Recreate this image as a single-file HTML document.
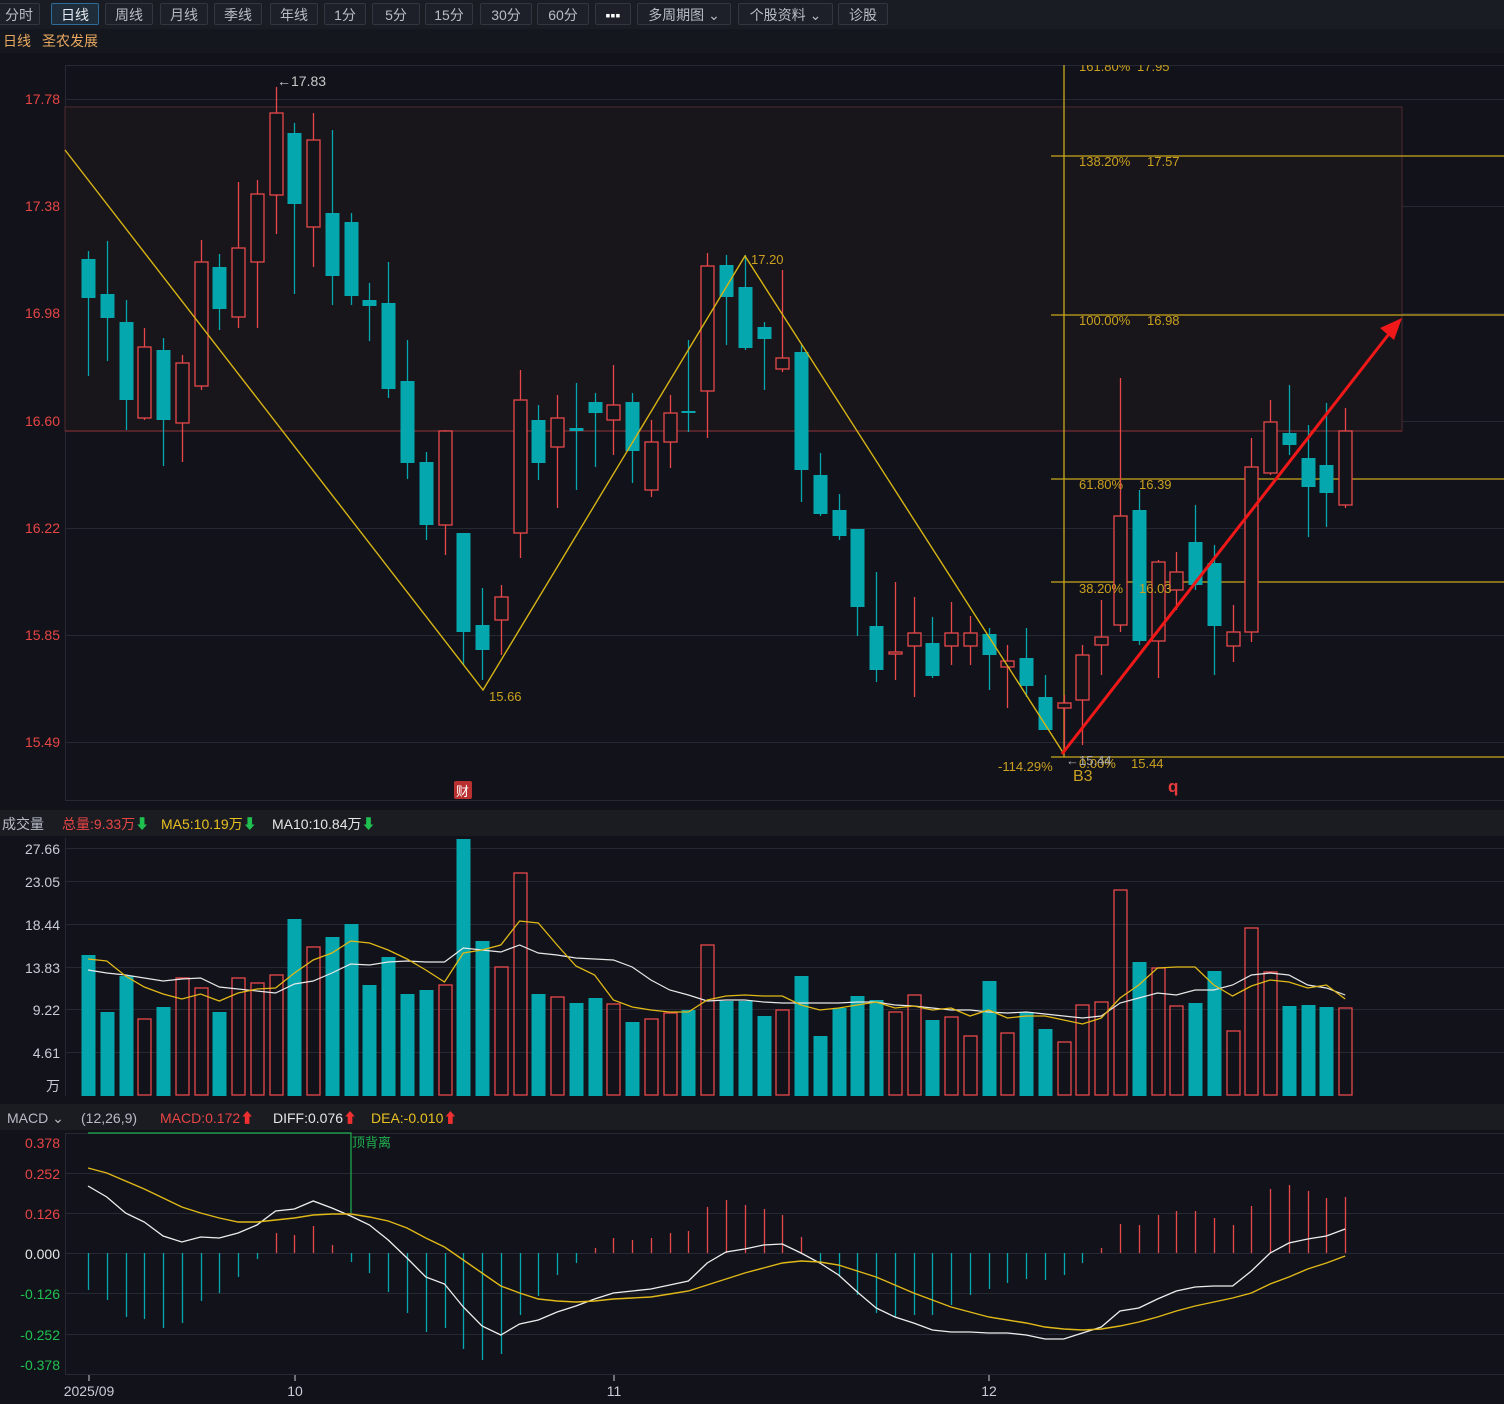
<!DOCTYPE html>
<html><head><meta charset="utf-8">
<style>
html,body{margin:0;padding:0;background:#12131a;width:1504px;height:1404px;overflow:hidden;font-family:"Liberation Sans","Noto Sans CJK SC",sans-serif;}
#tb{position:absolute;left:0;top:0;width:1504px;height:29px;background:#1a1c23;}
.b{position:absolute;top:3px;height:22px;border:1px solid #33363f;border-radius:2px;color:#b8bcc6;font-size:14px;line-height:22px;text-align:center;background:#1d2028;box-sizing:border-box;}
.b.on{border-color:#2f6b9a;background:#1f2c3a;color:#e6e9ef;}
svg{position:absolute;left:0;top:0;}
</style></head><body>
<div id="tb">
<div class="b" style="left:-2px;width:42px">分时</div>
<div class="b on" style="left:51px;width:48px">日线</div>
<div class="b" style="left:105px;width:48px">周线</div>
<div class="b" style="left:160px;width:48px">月线</div>
<div class="b" style="left:214px;width:48px">季线</div>
<div class="b" style="left:270px;width:48px">年线</div>
<div class="b" style="left:324px;width:42px">1分</div>
<div class="b" style="left:372px;width:48px">5分</div>
<div class="b" style="left:425px;width:48px">15分</div>
<div class="b" style="left:480px;width:52px">30分</div>
<div class="b" style="left:537px;width:52px">60分</div>
<div class="b" style="left:595px;width:36px;font-weight:bold;color:#fff">▪▪▪</div>
<div class="b" style="left:637px;width:94px">多周期图 ⌄</div>
<div class="b" style="left:738px;width:95px">个股资料 ⌄</div>
<div class="b" style="left:838px;width:50px">诊股</div>
</div>
<svg id="s" width="1504" height="1404" xmlns="http://www.w3.org/2000/svg" font-family="Liberation Sans, Noto Sans CJK SC, sans-serif">
<defs><clipPath id="cp"><rect x="65" y="65" width="1440" height="735"/></clipPath></defs>
<rect x="0" y="29" width="1504" height="24" fill="#15171e"/>
<text x="3" y="46" fill="#e8a860" font-size="14">日线</text>
<text x="42" y="46" fill="#e8a860" font-size="14">圣农发展</text>
<g id="grid" stroke="#262833" stroke-width="1"></g>
<rect x="65.5" y="65.5" width="1440" height="735" fill="none" stroke="#262833"/>
<rect x="65" y="107" width="1337" height="324" fill="#18151b" stroke="#4e2a2e" stroke-width="1"/>
<line x1="65" y1="431" x2="1402" y2="431" stroke="#7a2f33" stroke-width="1.2"/>
<g id="fib" stroke="#c9a81a" stroke-width="1.3">
<line x1="1064" y1="65" x2="1064" y2="757"/>
<line x1="1051" y1="156" x2="1504" y2="156"/>
<line x1="1051" y1="315" x2="1504" y2="315"/>
<line x1="1051" y1="479" x2="1504" y2="479"/>
<line x1="1051" y1="582" x2="1504" y2="582"/>
<line x1="1051" y1="757" x2="1504" y2="757"/>
</g>
<g fill="#e84545" font-size="14" text-anchor="end">
<text x="60" y="104">17.78</text><text x="60" y="211">17.38</text><text x="60" y="318">16.98</text><text x="60" y="426">16.60</text><text x="60" y="533">16.22</text><text x="60" y="640">15.85</text><text x="60" y="747">15.49</text>
</g>
<g id="cand"></g>
<polyline points="65,150 483,690 745,256 1064,754" fill="none" stroke="#d7b414" stroke-width="1.4"/>
<g fill="#c9a020" font-size="13">
<g clip-path="url(#cp)"><text x="1079" y="71">161.80%</text><text x="1137" y="71">17.95</text></g>
<text x="1079" y="166">138.20%</text><text x="1147" y="166">17.57</text>
<text x="1079" y="325">100.00%</text><text x="1147" y="325">16.98</text>
<text x="1079" y="489">61.80%</text><text x="1139" y="489">16.39</text>
<text x="1079" y="593">38.20%</text><text x="1139" y="593">16.03</text>
<text x="1079" y="768">0.00%</text>
<text x="1131" y="768">15.44</text>
<text x="998" y="771">-114.29%</text>
<text x="1073" y="781" font-size="16">B3</text>
<text x="751" y="264">17.20</text>
<text x="489" y="701">15.66</text>
</g>
<text x="1066" y="765" fill="#aaa" font-size="13">←15.44</text>
<text x="277" y="86" fill="#c8c8c8" font-size="14">←17.83</text>
<text x="1168" y="792" fill="#e83c3c" font-size="17" font-weight="bold">q</text>
<rect x="454" y="781" width="18" height="18" rx="2" fill="#b83030"/>
<text x="456" y="796" fill="#fff" font-size="13">财</text>
<line x1="1062" y1="754" x2="1392" y2="330" stroke="#f01818" stroke-width="3"/>
<polygon points="1402,318 1380,328 1394,340" fill="#f01818"/>

<rect x="0" y="810" width="1504" height="26" fill="#1a1c22"/>
<text x="2" y="829" fill="#b8bcc6" font-size="14">成交量</text>
<text x="62" y="829" fill="#e84545" font-size="14">总量:9.33万<tspan fill="#20c050">⬇</tspan></text>
<text x="161" y="829" fill="#e8c020" font-size="14">MA5:10.19万<tspan fill="#20c050">⬇</tspan></text>
<text x="272" y="829" fill="#e6e6e6" font-size="14">MA10:10.84万<tspan fill="#20c050">⬇</tspan></text>
<g fill="#c8ccd4" font-size="14" text-anchor="end">
<text x="60" y="854">27.66</text><text x="60" y="887">23.05</text><text x="60" y="930">18.44</text><text x="60" y="973">13.83</text><text x="60" y="1015">9.22</text><text x="60" y="1058">4.61</text><text x="60" y="1091">万</text>
</g>
<line x1="65.5" y1="838" x2="65.5" y2="1096" stroke="#262833"/>
<g id="vol"></g>

<rect x="0" y="1104" width="1504" height="26" fill="#1a1c22"/>
<text x="7" y="1123" fill="#b8bcc6" font-size="14">MACD ⌄</text>
<text x="81" y="1123" fill="#b8bcc6" font-size="14">(12,26,9)</text>
<text x="160" y="1123" fill="#e84545" font-size="14">MACD:0.172<tspan fill="#f03030">⬆</tspan></text>
<text x="273" y="1123" fill="#e6e6e6" font-size="14">DIFF:0.076<tspan fill="#f03030">⬆</tspan></text>
<text x="371" y="1123" fill="#e8c020" font-size="14">DEA:-0.010<tspan fill="#f03030">⬆</tspan></text>
<g font-size="14" text-anchor="end">
<text x="60" y="1148" fill="#e84545">0.378</text><text x="60" y="1179" fill="#e84545">0.252</text><text x="60" y="1219" fill="#e84545">0.126</text><text x="60" y="1259" fill="#e6e6e6">0.000</text><text x="60" y="1299" fill="#20c050">-0.126</text><text x="60" y="1340" fill="#20c050">-0.252</text><text x="60" y="1370" fill="#20c050">-0.378</text>
</g>
<rect x="65.5" y="1133.5" width="1440" height="241" fill="none" stroke="#262833"/>
<g id="macd"></g>
<polyline points="88,1133 351,1133 351,1213" fill="none" stroke="#20b050" stroke-width="1.2"/>
<text x="352" y="1147" fill="#20b050" font-size="13">顶背离</text>
<g stroke="#c8ccd4"><line x1="89" y1="1375" x2="89" y2="1381"/><line x1="295" y1="1375" x2="295" y2="1381"/><line x1="614" y1="1375" x2="614" y2="1381"/><line x1="989" y1="1375" x2="989" y2="1381"/></g>
<g fill="#c8ccd4" font-size="14" text-anchor="middle">
<text x="89" y="1396">2025/09</text><text x="295" y="1396">10</text><text x="614" y="1396">11</text><text x="989" y="1396">12</text>
</g>
</svg>
<script>
var NS="http://www.w3.org/2000/svg";
function el(p,t,a){var e=document.createElementNS(NS,t);for(var k in a)e.setAttribute(k,a[k]);document.getElementById(p).appendChild(e);return e;}
[99,206,313,421,528,635,742].forEach(function(y){el("grid","line",{x1:65,y1:y+.5,x2:1504,y2:y+.5});});
[848,881,924,967,1009,1052].forEach(function(y){el("grid","line",{x1:65,y1:y+.5,x2:1504,y2:y+.5});});
[1173,1213,1253,1293,1334].forEach(function(y){el("grid","line",{x1:65,y1:y+.5,x2:1504,y2:y+.5});});
var T="#04a7ae",R="#e8484a";
var C=[[259,298,251,376,0],[294,318,241,361,0],[322,400,300,430,0],[347,418,328,420,1],[350,420,338,466,0],[363,423,355,462,1],[262,386,240,390,1],[267,309,254,330,0],[248,317,182,328,1],[194,262,180,328,1],[113,195,87,234,1],[133,204,123,294,0],[140,227,113,267,1],[213,276,130,305,0],[222,296,213,305,0],[300,306,283,341,0],[303,389,262,398,0],[381,463,340,479,0],[462,525,452,540,0],[431,525,430,555,1],[533,632,533,665,0],[625,650,588,680,0],[597,620,585,655,1],[400,533,370,558,1],[420,463,405,480,0],[418,447,395,508,1],[428,431,383,490,0],[402,413,393,467,0],[405,420,365,455,1],[402,451,393,483,0],[442,490,420,497,1],[413,442,395,468,1],[411,413,340,432,0],[266,391,253,438,1],[265,297,255,345,0],[287,348,255,350,0],[327,339,322,390,0],[358,369,270,372,1],[352,470,345,502,0],[475,514,453,516,0],[510,536,494,540,0],[529,607,529,636,0],[626,670,572,682,0],[652,654,582,680,1],[633,646,597,697,1],[643,676,617,678,0],[633,646,602,665,1],[633,646,616,665,1],[634,655,628,690,0],[661,667,645,708,1],[658,686,628,697,0],[697,730,675,730,0],[703,708,695,750,1],[655,700,645,745,1],[637,645,600,675,1],[516,625,378,632,1],[510,641,490,645,0],[562,641,560,678,1],[572,590,552,610,1],[542,585,505,590,0],[563,626,545,675,0],[632,646,605,662,1],[467,632,438,642,1],[422,473,400,475,1],[433,445,385,455,0],[458,487,425,537,0],[465,493,403,527,0],[431,505,408,508,1]];
function X(i){return 88+i*18.764;}
C.forEach(function(c,i){var x=Math.round(X(i))+.5,col=c[4]?R:T;
el("cand","line",{x1:x,y1:c[2],x2:x,y2:c[3],stroke:col,"stroke-width":1.3});
var h=Math.max(c[1]-c[0],1.5);
if(c[4])el("cand","rect",{x:x-6.5,y:c[0],width:13,height:h,fill:"#13131a",stroke:col,"stroke-width":1.3});
else el("cand","rect",{x:x-7,y:c[0],width:14,height:h,fill:col});});
var V=[955,1012,976,1019,1007,978,988,1012,978,983,975,919,947,937,924,985,957,994,990,985,839,941,967,873,994,997,1003,998,1004,1022,1019,1013,1010,945,1001,1001,1016,1010,976,1036,1008,996,1000,1012,995,1020,1017,1036,981,1033,1012,1029,1042,1005,1002,890,962,968,1006,1003,971,1031,928,972,1006,1005,1007,1008];
V.forEach(function(v,i){var x=Math.round(X(i))+.5;var r=C[i][4];
if(r)el("vol","rect",{x:x-6.5,y:v,width:13,height:1095-v,fill:"none",stroke:R,"stroke-width":1.3});
else el("vol","rect",{x:x-7,y:v,width:14,height:1096-v,fill:T});});
var Y5=[959,961,976,987,994,999,994,1001,993,989,988,973,960,953,941,943,950,959,970,982,953,950,945,921,923,945,966,975,1000,1007,1010,1012,1012,1000,996,995,996,996,1005,1010,1008,1005,1002,1008,1006,1010,1008,1016,1010,1018,1016,1016,1020,1024,1018,998,985,968,967,967,985,996,986,980,982,988,985,999];
var Y10=[970,973,975,978,981,979,978,987,989,991,993,984,981,973,964,965,962,961,962,962,948,950,952,945,953,955,958,959,960,967,980,990,995,1001,1000,1000,1002,1003,1003,1003,1003,1002,1002,1005,1006,1008,1010,1010,1012,1013,1012,1014,1016,1018,1016,1003,998,993,995,990,990,985,975,973,975,985,988,995];
function pl(p,arr,col,w){el(p,"polyline",{points:arr.map(function(y,i){return X(i).toFixed(1)+","+y;}).join(" "),fill:"none",stroke:col,"stroke-width":w});}
pl("vol",Y10,"#e8e8e8",1.2);pl("vol",Y5,"#e0b818",1.3);
var M=[1290,1300,1317,1319,1328,1323,1301,1293,1277,1259,1233,1235,1226,1245,1262,1273,1292,1313,1332,1328,1349,1360,1354,1315,1296,1275,1263,1248,1238,1240,1238,1233,1231,1207,1200,1205,1209,1215,1237,1263,1276,1295,1313,1317,1315,1315,1305,1295,1289,1283,1279,1280,1275,1263,1248,1224,1225,1215,1211,1211,1218,1225,1206,1189,1185,1191,1198,1197];
M.forEach(function(y,i){var x=Math.round(X(i))+.5;el("macd","line",{x1:x,y1:1253,x2:x,y2:y,stroke:y<1253?R:T,"stroke-width":1.3});});
var D=[1186,1197,1213,1222,1236,1242,1237,1238,1233,1225,1211,1209,1201,1208,1216,1225,1240,1258,1277,1284,1307,1326,1335,1324,1320,1312,1306,1299,1293,1291,1289,1285,1281,1263,1252,1249,1245,1244,1253,1263,1275,1292,1308,1317,1323,1330,1332,1332,1333,1333,1335,1339,1339,1333,1327,1311,1308,1299,1291,1287,1286,1286,1271,1253,1243,1239,1236,1229];
var E=[1168,1173,1181,1189,1198,1207,1213,1218,1222,1222,1220,1218,1215,1214,1214,1217,1221,1228,1238,1247,1260,1273,1286,1293,1299,1301,1302,1301,1299,1298,1297,1294,1291,1285,1279,1273,1268,1263,1261,1262,1265,1271,1277,1285,1293,1300,1307,1312,1317,1320,1323,1327,1329,1330,1329,1326,1322,1317,1311,1306,1302,1298,1293,1284,1277,1269,1263,1256];
pl("macd",D,"#eeeeee",1.3);pl("macd",E,"#e0b818",1.4);
</script>
</body></html>
